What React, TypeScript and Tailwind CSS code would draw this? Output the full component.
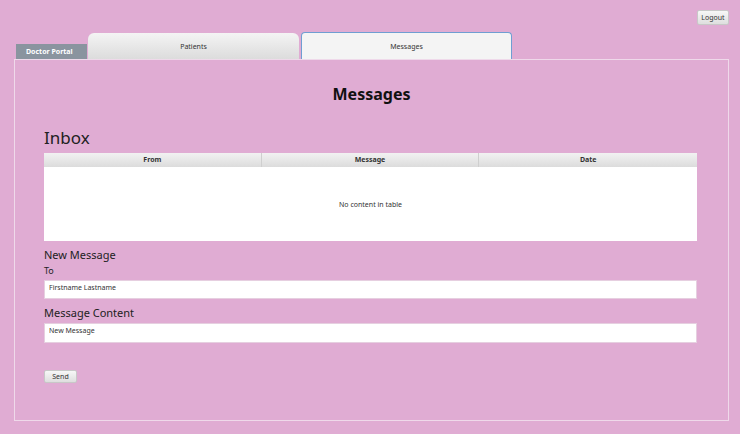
export default function App() {
  return (
    <div
      className="w-[740px] h-[434px] bg-[#e0acd3] relative overflow-hidden text-[#222]"
      style={{ fontFamily: '"Noto Sans", "Open Sans", sans-serif' }}
    >
      {/* Top bar: logout */}
      <div className="flex justify-end pt-[10px] pr-[11px] h-[32px]">
        <button className="h-[15px] w-[32px] text-[7px] leading-none text-[#333] rounded-[2px] border border-[#c8c8c8] bg-gradient-to-b from-[#f7f7f7] to-[#dedede]">
          Logout
        </button>
      </div>

      {/* Tabs */}
      <div className="flex items-end pl-[16px] h-[27px]">
        <div className="w-[71px] h-[15px] bg-[#8a949f] text-white text-[7px] font-bold flex items-center pl-[10px] pt-[2px]">
          Doctor Portal
        </div>
        <div className="ml-[1px] w-[211px] h-[26px] rounded-t-[6px] bg-gradient-to-b from-[#f4f4f4] to-[#dcdcdc] text-[7px] text-[#333] flex justify-center pt-[9px]">
          Patients
        </div>
        <div className="ml-[2px] w-[211px] h-[27px] rounded-t-[4px] bg-[#f4f4f4] border border-b-0 border-[#6f9ed2] text-[7px] text-[#333] flex justify-center pt-[9px]">
          Messages
        </div>
      </div>

      {/* Content panel */}
      <div className="mx-[14px] w-[715px] h-[362px] border border-[#efd9ea] px-[29px]">
        <h1 className="text-center font-bold text-[16px] leading-none text-[#111] mt-[26px]">
          Messages
        </h1>
        <div className="text-[17px] leading-none text-[#222] mt-[27px]">Inbox</div>

        {/* Table */}
        <div className="mt-[7px] w-[653px] h-[88px] bg-white flex flex-col">
          <div className="h-[14px] grid grid-cols-3 bg-gradient-to-b from-[#f2f2f2] to-[#dcdcdc] text-[7px] font-bold text-[#333]">
            <div className="flex items-center justify-center pt-[1px] border-r border-[#cfcfcf]">From</div>
            <div className="flex items-center justify-center pt-[1px] border-r border-[#cfcfcf]">Message</div>
            <div className="flex items-center justify-center pt-[1px]">Date</div>
          </div>
          <div className="flex-1 flex items-center justify-center pt-[2px] text-[7px] text-[#333]">
            No content in table
          </div>
        </div>

        <div className="text-[11px] leading-none text-[#222] mt-[8px]">New Message</div>
        <div className="text-[9px] leading-none text-[#222] mt-[6px]">To</div>
        <div className="mt-[5px] w-[653px] h-[19px] bg-white border border-[#e6cfe0] text-[7px] text-[#333] pl-[4px] pt-[2px]">
          Firstname Lastname
        </div>
        <div className="text-[11px] leading-none text-[#222] mt-[8px]">Message Content</div>
        <div className="mt-[5px] w-[653px] h-[20px] bg-white border border-[#e6cfe0] text-[7px] text-[#333] pl-[4px] pt-[2px]">
          New Message
        </div>

        <button className="mt-[27px] w-[33px] h-[13px] text-[7px] leading-none text-[#333] rounded-[2px] border border-[#c8c8c8] bg-gradient-to-b from-[#f7f7f7] to-[#dedede]">
          Send
        </button>
      </div>
    </div>
  );
}
